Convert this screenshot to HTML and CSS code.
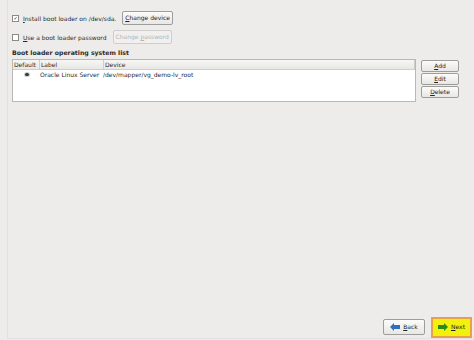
FILE: index.html
```html
<!DOCTYPE html>
<html lang="en">
<head>
    <meta charset="UTF-8">
    <title>Boot Loader</title>
    <link rel="stylesheet" href="styles.css">
</head>
<body>

<div class="screen">
    <main class="content">
        <div class="opt-row">
            <label class="check"><span class="box checked">&#10003;</span><span><u>I</u>nstall boot loader on /dev/sda.</span></label>
            <button class="btn"><u>C</u>hange device</button>
        </div>
        <div class="opt-row">
            <label class="check"><span class="box"></span><span><u>U</u>se a boot loader password</span></label>
            <button class="btn" disabled>Change <u>p</u>assword</button>
        </div>

        <h3 class="list-title">Boot loader operating system list</h3>
        <div class="list-area">
            <div class="os-table">
                <div class="thead">
                    <span class="col-default">Default</span>
                    <span class="col-label">Label</span>
                    <span class="col-device">Device</span>
                </div>
                <div class="trow">
                    <span class="col-default"><span class="radio"></span></span>
                    <span class="col-label">Oracle Linux Server</span>
                    <span class="col-device">/dev/mapper/vg_demo-lv_root</span>
                </div>
            </div>
            <div class="side-btns">
                <button class="btn"><u>A</u>dd</button>
                <button class="btn"><u>E</u>dit</button>
                <button class="btn"><u>D</u>elete</button>
            </div>
        </div>
    </main>

    <footer class="nav-bar">
        <button class="btn nav-btn">
            <svg width="10" height="8" viewBox="0 0 10 8"><path d="M0 4 L4 0 L4 2 L10 2 L10 6 L4 6 L4 8 Z" fill="#2f6fc0"/></svg>
            <span><u>B</u>ack</span>
        </button>
        <button class="btn nav-btn next">
            <svg width="10" height="8" viewBox="0 0 10 8"><path d="M10 4 L6 0 L6 2 L0 2 L0 6 L6 6 L6 8 Z" fill="#2c8a1c"/></svg>
            <span><u>N</u>ext</span>
        </button>
    </footer>
</div>

</body>
</html>
```

FILE: styles.css
```css
body {
    margin: 0;
    padding: 0;
    background: #edeceb;
    font-family: "DejaVu Sans", sans-serif;
    font-size: 6px;
    color: #2a2a2a;
}
.screen {
    height: 338px;
    display: flex;
    flex-direction: column;
    margin-left: 7px;
    border-left: 1px solid #e2e1df;
    border-bottom: 1px solid #e2e1df;
}
.content {
    flex: 1;
    padding: 10px 0 0 4px;
}
u {
    text-decoration: underline;
}
.opt-row {
    display: flex;
    align-items: center;
    gap: 6px;
    height: 16px;
    margin-bottom: 3px;
}
.check {
    display: flex;
    align-items: center;
    gap: 4px;
}
.box {
    width: 5px;
    height: 5px;
    border: 1px solid #8a8a8a;
    background: #fff;
    font-size: 5px;
    line-height: 5px;
    text-align: center;
    color: #333;
}
.btn {
    font-family: "DejaVu Sans", sans-serif;
    font-size: 6px;
    color: #222;
    background: linear-gradient(#fbfbfa, #e8e7e5);
    border: 1px solid #9e9d9b;
    border-radius: 2px;
    padding: 2px 2px;
    line-height: 8px;
}
.btn:disabled {
    color: #b5b4b2;
    border-color: #cfcecc;
    background: #f1f0ef;
}
.list-title {
    font-size: 6.2px;
    font-weight: bold;
    margin: 4px 0 3px 0;
}
.list-area {
    display: flex;
    gap: 5px;
}
.os-table {
    width: 402px;
    height: 41px;
    background: #fff;
    border: 1px solid #b9b8b6;
}
.thead, .trow {
    display: flex;
    height: 9px;
    line-height: 9px;
}
.thead {
    background: linear-gradient(#f6f6f5, #e9e8e6);
    border-bottom: 1px solid #cfcecc;
}
.thead span {
    border-right: 1px solid #cfcecc;
    padding-left: 1px;
}
.col-default {
    width: 25px;
}
.trow .col-default {
    display: flex;
    justify-content: center;
    align-items: center;
}
.col-label {
    width: 62px;
}
.col-device {
    flex: 1;
}
.trow span {
    padding-left: 1px;
}
.radio {
    width: 3px;
    height: 3px;
    border-radius: 50%;
    background: #333;
    box-shadow: 0 0 0 1px #ccc;
}
.side-btns {
    display: flex;
    flex-direction: column;
    gap: 1px;
    margin-top: 1px;
}
.side-btns .btn {
    width: 38px;
    height: 12px;
    padding: 0;
}
.nav-bar {
    display: flex;
    justify-content: flex-end;
    align-items: center;
    gap: 6px;
    padding: 0 2px 0 0;
    height: 22px;
}
.nav-btn {
    display: flex;
    align-items: center;
    justify-content: center;
    gap: 3px;
    width: 42px;
    height: 16px;
}
.next {
    width: 41px;
    height: 21px;
    background: #f2f00c;
    border: 2px solid #e9a04a;
    border-radius: 0;
}
```
